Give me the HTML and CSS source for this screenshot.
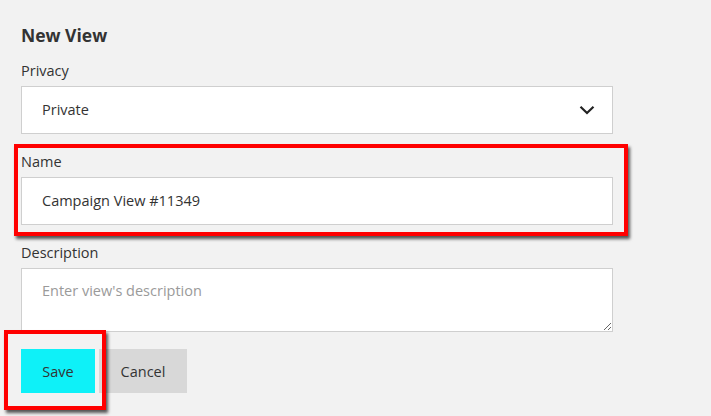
FILE: index.html
```html
<!DOCTYPE html>
<html>
<head>
<meta charset="utf-8">
<link rel="stylesheet" href="styles.css">
</head>
<body>
<div class="panel">
  <h2 class="title">New View</h2>
  <div class="group">
    <label class="label">Privacy</label>
    <div class="select">
      <span>Private</span>
      <svg class="chev" width="16" height="10" viewBox="0 0 16 10"><path d="M1.5 1.8 L8 8 L14.5 1.8" fill="none" stroke="#222" stroke-width="2.2"/></svg>
    </div>
  </div>
  <div class="group hl-wrap">
    <label class="label">Name</label>
    <div class="input">Campaign View #11349</div>
    <span class="hl hl-name"></span>
  </div>
  <div class="group group-last">
    <label class="label">Description</label>
    <textarea class="textarea" placeholder="Enter view's description"></textarea>
  </div>
  <div class="actions">
    <div class="hl-wrap">
      <button class="btn btn-save">Save</button>
      <span class="hl hl-save"></span>
    </div>
    <button class="btn btn-cancel">Cancel</button>
  </div>
</div>
</body>
</html>
```
FILE: styles.css
```css
html, body {
  margin: 0;
  padding: 0;
  background: #f2f2f2;
}
body {
  font-family: "Open Sans", "Liberation Sans", sans-serif;
  color: #333;
  font-size: 14.5px;
}
.panel {
  padding: 23px 0 30px 21px;
  width: 592px;
}
.title {
  margin: 0 0 14px 0;
  font-size: 17.5px;
  line-height: 24px;
  font-weight: 700;
  color: #333;
}
.group {
  margin-bottom: 18px;
}
.group-last {
  margin-bottom: 17px;
}
.label {
  display: block;
  line-height: 20px;
  margin-bottom: 5px;
  color: #333;
}
.select, .input {
  box-sizing: border-box;
  height: 48px;
  background: #fff;
  border: 1px solid #cfcfcf;
  padding: 0 17px 0 20px;
  display: flex;
  align-items: center;
  line-height: 20px;
}
.select {
  justify-content: space-between;
}
.textarea {
  display: block;
  box-sizing: border-box;
  width: 100%;
  height: 64px;
  margin: 0;
  border: 1px solid #cfcfcf;
  background: #fff;
  padding: 12px 20px;
  font-family: inherit;
  font-size: 14.5px;
  line-height: 20px;
  color: #333;
  outline: none;
}
.textarea::placeholder {
  color: #9a9a9a;
}
.hl-wrap {
  position: relative;
}
.hl {
  position: absolute;
  border: 4px solid #ff0000;
  box-shadow: 2px 3px 3px rgba(0, 0, 0, 0.65);
  pointer-events: none;
}
.hl-name {
  left: -7px;
  top: -8px;
  right: -15px;
  bottom: -11px;
}
.actions {
  display: flex;
  gap: 4px;
}
.btn {
  border: none;
  height: 44px;
  font-family: inherit;
  font-size: 14.5px;
  color: #333;
  padding: 0;
  margin: 0;
}
.btn-save {
  display: block;
  width: 74px;
  background: #0ef1f8;
}
.btn-cancel {
  width: 88px;
  background: #d8d8d8;
}
.hl-save {
  left: -17px;
  top: -19px;
  right: -11px;
  bottom: -17px;
}
```
